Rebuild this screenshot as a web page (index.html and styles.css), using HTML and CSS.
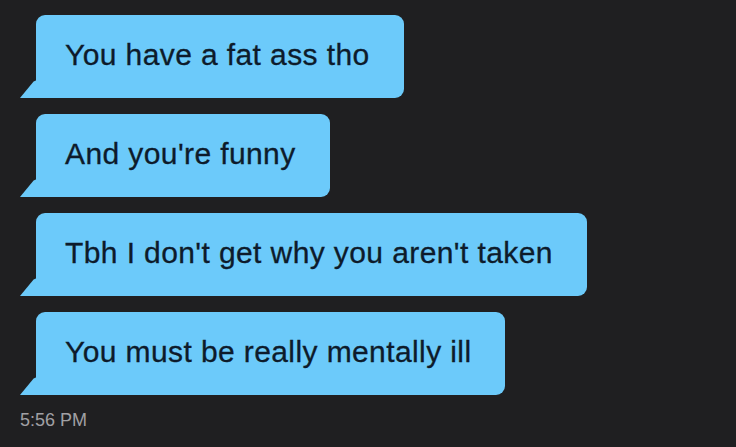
FILE: index.html
```html
<!DOCTYPE html>
<html lang="en">
<head>
    <meta charset="UTF-8">
    <meta name="viewport" content="width=device-width, initial-scale=1.0">
    <title>Chat</title>
    <link rel="stylesheet" href="styles.css">
</head>
<body>
    <!-- Conversation -->
    <div class="chat">
        <div class="messages">
            <div class="bubble">You have a fat ass tho</div>
            <div class="bubble">And you're funny</div>
            <div class="bubble">Tbh I don't get why you aren't taken</div>
            <div class="bubble">You must be really mentally ill</div>
        </div>
        <div class="time">5:56 PM</div>
    </div>
</body>
</html>
```

FILE: styles.css
```css
/* Base */
body {
    margin: 0;
    background-color: #1f1f21;
    font-family: "Liberation Sans", Arial, sans-serif;
    color: #0d1b2b;
}

.chat {
    padding: 15px 0 0 20px;
}

/* Message list */
.messages {
    display: flex;
    flex-direction: column;
    align-items: flex-start;
    gap: 16px;
}

.bubble {
    position: relative;
    margin-left: 16px;
    padding: 22px 34px 25px 29px;
    background: #6ccafa;
    border-radius: 9px 9px 9px 0;
    font-size: 30px;
    line-height: 36px;
    letter-spacing: 0.4px;
    -webkit-text-stroke: 0.3px #0d1b2b;
    white-space: nowrap;
}

/* Tail in the bottom-left corner */
.bubble::before {
    content: "";
    position: absolute;
    left: -16px;
    bottom: 0;
    width: 17px;
    height: 18px;
    background: #6ccafa;
    clip-path: polygon(100% 0, 100% 100%, 0 100%, 80% 8%);
}

/* Timestamp */
.time {
    margin-top: 14px;
    font-size: 18px;
    line-height: 22px;
    color: #a0a0a4;
}
```
